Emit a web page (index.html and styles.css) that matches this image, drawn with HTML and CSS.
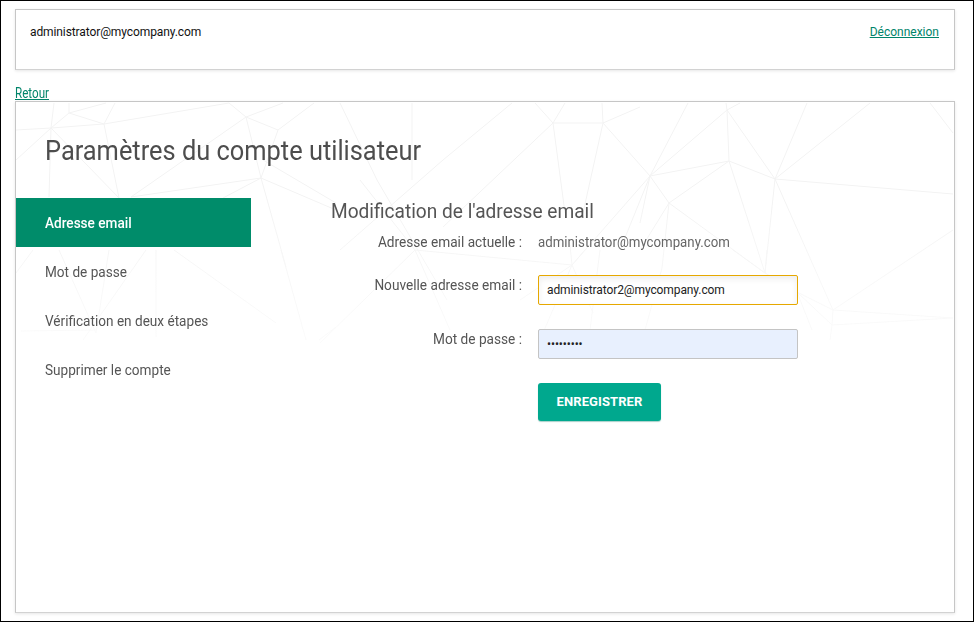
FILE: index.html
```html
<!DOCTYPE html>
<html lang="fr">
<head>
<meta charset="utf-8">
<title>Paramètres du compte utilisateur</title>
<link rel="stylesheet" href="styles.css">
</head>
<body>
<header class="topbar">
  <span class="user">administrator@mycompany.com</span>
  <a class="logout" href="#">Déconnexion</a>
</header>
<div class="back-row"><a class="back" href="#">Retour</a></div>
<main class="panel">
  <svg class="mesh" viewBox="0 0 938 340" width="938" height="340" aria-hidden="true">
    <g transform="translate(-16 -102)">
      <path d="M16 130L51 128L104 124L229 103M51 128L54 103M51 128L16 160M51 128L49 197M51 128L119 198M104 124L119 198M104 124L115 103M69 113L69 103M69 113L106 103M69 113L104 124M69 113L51 128
      M246 117L131 197M246 117L229 103M246 117L283 103M246 117L278 130M278 130L314 103M278 130L261 178M246 117L261 178M261 178L336 210M261 178L286 267M261 178L131 197M261 178L223 198M263 160L336 203
      M340 103L377 180L447 300M412 103L412 180M512 103L443 160L340 250M553 123L603 123M553 123L565 103M553 123L535 103M603 123L602 103M603 123L640 107M553 123L443 227M553 123L565 213M603 123L583 213M603 123L650 176
      M415 250L572 265M415 250L320 343M415 250L450 330M415 250L360 180M572 265L520 300M572 265L593 313M572 265L570 245M585 250L572 265M650 176L572 265M650 176L620 250
      M727 110L726 103M727 110L740 103M688 103L650 176M727 110L650 176M727 110L729 161M727 110L775 179M729 161L650 176M729 161L775 179M729 161L669 203M729 161L765 273M775 179L807 103M775 179L870 103M775 179L953 194M775 179L765 273M775 179L833 310M650 176L669 203M650 176L640 223M669 203L662 268M669 203L640 250M669 203L765 273M930 103L953 133M953 230L833 310
      M833 310L953 318M833 310L832 325L830 340M832 325L953 318M765 273L797 292L833 310M797 292L832 325M797 292L812 330M733 250L765 273M767 250L765 273
      M96 333L59 250M96 333L109 250M83 340L146 250M156 250L156 337M174 250L276 323M281 250L306 340M336 327L319 340M21 331L96 330M33 250L16 273M572 265L540 340M662 268L645 330M600 250L590 330" />
    </g>
  </svg>
  <div class="panel-body">
    <h1 class="title">Paramètres du compte utilisateur</h1>
    <div class="columns">
      <nav class="side">
        <a class="side-item active" href="#"><span class="side-text">Adresse email</span></a>
        <a class="side-item" href="#"><span class="side-text">Mot de passe</span></a>
        <a class="side-item" href="#"><span class="side-text">Vérification en deux étapes</span></a>
        <a class="side-item" href="#"><span class="side-text">Supprimer le compte</span></a>
      </nav>
      <section class="content">
        <h2 class="subtitle">Modification de l'adresse email</h2>
        <form class="form">
          <div class="row row-static">
            <span class="label">Adresse email actuelle :</span>
            <span class="value">administrator@mycompany.com</span>
          </div>
          <div class="row">
            <label class="label" for="e">Nouvelle adresse email :</label>
            <input class="input focused" id="e" type="text" value="administrator2@mycompany.com">
          </div>
          <div class="row">
            <label class="label" for="p">Mot de passe :</label>
            <input class="input filled" id="p" type="password" value="123456789">
          </div>
          <div class="row">
            <span class="label"></span>
            <button class="save" type="button">ENREGISTRER</button>
          </div>
        </form>
      </section>
    </div>
  </div>
</main>
</body>
</html>
```

FILE: styles.css
```css
* { box-sizing: border-box; }
html, body { margin: 0; height: 622px; overflow: hidden; background: #fff; }
body {
  border: 1px solid #000;
  padding: 8px 18px 0 14px;
  font-family: Roboto, sans-serif;
  color: #555;
}
a { color: #00846a; }
.topbar {
  height: 61px;
  border: 1px solid #c6c6c6;
  border-bottom-color: #d2d2d2;
  box-shadow: 0 1px 3px rgba(0,0,0,.1);
  padding: 14px 15px 0 14px;
  display: flex;
  justify-content: space-between;
  align-items: flex-start;
  font: 12px/16px Roboto, sans-serif;
}
.user { color: #111; letter-spacing: -.1px; }
.back-row { margin-top: 14px; height: 17px; line-height: 0; }
.back { display: inline-block; font-size: 14px; line-height: 18px; transform: scaleX(.83); transform-origin: left center; }
.panel {
  position: relative;
  height: 512px;
  border: 1px solid #c6c6c6;
  border-bottom-color: #d2d2d2;
  box-shadow: 0 1px 3px rgba(0,0,0,.1);
  overflow: hidden;
}
.mesh {
  position: absolute;
  left: 0; top: 0;
  fill: none;
  stroke: #f3f3f3;
  stroke-width: 1;
  -webkit-mask-image: linear-gradient(#000 28%, rgba(0,0,0,.55) 55%, transparent 100%);
  mask-image: linear-gradient(#000 28%, rgba(0,0,0,.55) 55%, transparent 100%);
}
.panel-body { position: relative; }
.title { margin: 0 0 0 29px; padding-top: 30px; height: 96px; font-weight: 400; font-size: 28px; line-height: 38px; color: #4d4d4d; transform: scaleX(.907); transform-origin: left center; white-space: nowrap; }
.columns { display: flex; }
.side { width: 235px; flex: none; display: flex; flex-direction: column; }
.side-item { height: 49px; padding: 1px 0 0 29px; font-size: 15px; line-height: 49px; color: #555; text-decoration: none; }
.side-text { display: inline-block; transform: scaleX(.906); transform-origin: left center; white-space: nowrap; }
.side-item.active { background: #008c6a; color: #fff; font-weight: 500; }
.content { margin-left: 80px; }
.subtitle { margin: 0; font-weight: 400; font-size: 20px; line-height: 26px; color: #555; height: 34px; transform: scaleX(.955); transform-origin: left center; white-space: nowrap; }
.form { display: flex; flex-direction: column; gap: 24px; }
.row { display: flex; gap: 16px; align-items: flex-start; }
.label { width: 191px; text-align: right; font-size: 15px; line-height: 20px; flex: none; transform: scaleX(.91); transform-origin: right center; white-space: nowrap; }
.row-static { height: 21px; margin-bottom: -2px; }
.value { font: 14px/20px Roboto, sans-serif; color: #666; transform: scaleX(.946); transform-origin: left center; }
.input {
  width: 260px; height: 30px; padding: 0 8px 1px; border-radius: 2px;
  font: 12px Roboto, sans-serif; letter-spacing: -.1px; color: #222; outline: 0;
  border: 1px solid #c4c4c4;
}
.focused { border-color: #e6a800; box-shadow: inset 0 3px 6px rgba(0,0,0,.07); }
.filled { background: #e8f0fe; }
.save {
  width: 123px; height: 38px; border: 0; border-radius: 3px; padding: 0 0 2px;
  background: #00a88e; color: #fff; font: 700 13px Roboto, sans-serif; letter-spacing: .1px;
  box-shadow: 0 1px 1px rgba(0,120,100,.35);
}
```
